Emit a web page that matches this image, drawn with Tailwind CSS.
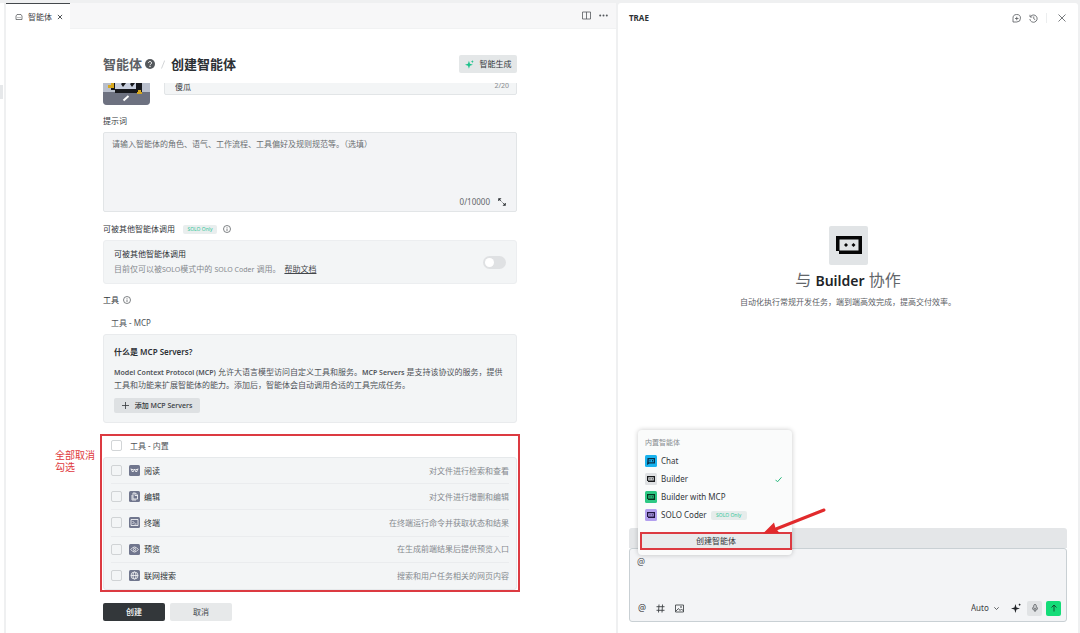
<!DOCTYPE html>
<html lang="zh-CN">
<head>
<meta charset="utf-8">
<title>创建智能体 - TRAE</title>
<script src="https://cdn.jsdelivr.net/npm/@tailwindcss/browser@4"></script>
</head>
<body class="flex min-h-screen bg-[#eff0f1] pt-[3px] font-['Noto_Sans','Noto_Sans_CJK_SC',sans-serif] text-[8px] leading-3 text-[#4f5358]">

<!-- Edge of the collapsed side bar -->
<div class="w-1 shrink-0 bg-white pt-[82px]"><div class="h-[14px] w-[3px] bg-[#e6e8ea]"></div></div>

<!-- Agent editor -->
<main class="ml-0.5 flex min-w-0 flex-[610] flex-col bg-white">
  <div class="flex h-[26px] items-stretch justify-between border-b border-[#f1f2f3] bg-[#f7f7f8]">
    <div class="-mb-px flex w-16 items-center gap-[5px] border-t border-[#44484c] bg-white pl-[9px] text-[#3c4043]">
      <svg class="size-2" viewBox="0 0 16 16" fill="none" stroke="currentColor" stroke-width="1.300"><path d="M4 3h8l2 3v7H2V6z"/><path d="M6 8v2M10 8v2"/></svg>
      <span>智能体</span>
      <button aria-label="关闭标签" class="size-[6px]"><svg viewBox="0 0 10 10" fill="none" stroke="currentColor" stroke-width="1.500"><path d="M1.500 1.500l7 7M8.500 1.500l-7 7"/></svg></button>
    </div>
    <div class="flex items-center gap-2 pr-2 text-[#55595d]">
      <button aria-label="拆分编辑器"><svg class="size-[9px]" viewBox="0 0 9 9" fill="none" stroke="currentColor" stroke-width=".8"><path d="M.5 1h8v7h-8zM4.500 1v7"/></svg></button>
      <button aria-label="更多"><svg class="h-[3px] w-[9px]" viewBox="0 0 9 3" fill="currentColor"><circle cx="1.2" cy="1.5" r="1"/><circle cx="4.5" cy="1.5" r="1"/><circle cx="7.8" cy="1.5" r="1"/></svg></button>
    </div>
  </div>

  <form class="mx-auto w-full max-w-[416px] pt-[26px] pr-0.5 pb-3">
    <div class="flex h-[18px] items-center">
      <h1 class="flex items-center text-[13px] leading-4 font-bold">
        <a href="#" class="text-[#5c6065]">智能体</a>
        <svg class="ml-[3px] size-[10px]" viewBox="0 0 18 18"><circle cx="9" cy="9" r="9" fill="#54585c"/><path d="M6.300 7a2.700 2.600 0 1 1 4.200 2.200c-1 .6-1.500 1-1.500 2" fill="none" stroke="#fff" stroke-width="1.800"/><circle cx="9" cy="13.500" r="1.200" fill="#fff"/></svg>
        <svg class="mx-[6px] h-[9px] w-1" viewBox="0 0 4 9" stroke="#d3d5d7" fill="none"><path d="M3.700 .5L.5 8.500"/></svg>
        <span class="text-[#2c3034]">创建智能体</span>
      </h1>
      <button type="button" class="ml-auto flex h-[18px] w-[58px] items-center justify-center gap-1.5 rounded-xs bg-[#e4e7e8] text-[#33373b]">
        <svg class="size-[9px]" viewBox="0 0 16 16" fill="#1ec28b"><path d="M7 1.500l1.700 5.300L14 8.500l-5.300 1.700L7 15.500l-1.700-5.300L0 8.500l5.300-1.700zM13 0l.8 2 2 .8-2 .8-.8 2-.8-2-2-.8 2-.8z"/></svg>
        智能生成
      </button>
    </div>

    <!-- First row of the form, scrolled partly under the heading -->
    <div class="mt-2.5 flex h-[22px] items-end gap-[14px] overflow-hidden">
      <button type="button" aria-label="更换头像" class="shrink-0 overflow-hidden rounded-[4px]">
        <svg class="h-[46px] w-[47px]" viewBox="0 0 47 46"><path fill="#b9bfcc" d="M0 0h47v46H0z"/><path fill="#c8cfde" d="M12 14h25v17H12z"/><path fill="#6d7180" d="M0 33h47v13H0z"/><path fill="#17181c" d="M8 12h4v19H8zM33 12h6v21h-6zM12 30h27v4H12z"/><path fill="#d7a81f" d="M5 26h6v3H5zM8 23h3v6H8zM35 31h3v4h-3zM34 33h5v2h-5z"/><path fill="#17181c" d="M18 25l4-4 1 3-3 4zM27 25l4-4 1 3-3 4z"/><path stroke="#fff" stroke-width="2" d="M20.500 41.500l5-4.500"/></svg>
      </button>
      <label class="relative mb-2.5 flex-1">
        <span class="sr-only">名称</span>
        <input type="text" value="傻瓜" class="block h-[18px] w-full rounded-xs border border-[#e2e5e7] bg-[#f3f5f6] px-2.5 text-[8px] text-[#33373b]">
        <span class="absolute top-[3px] right-2 text-[7px] text-[#888c90]">2/20</span>
      </label>
    </div>

    <label for="prompt" class="mt-2.5 block text-[#33373b]">提示词</label>
    <div class="relative mt-[5px]">
      <textarea id="prompt" placeholder="请输入智能体的角色、语气、工作流程、工具偏好及规则规范等。（选填）" class="block h-20 w-full resize-none rounded-xs border border-[#e2e5e7] bg-[#f3f4f6] px-2 py-[5px] placeholder:text-[#6a6e72]"></textarea>
      <div class="absolute right-[11px] bottom-1 flex items-center gap-2 text-[#62666a]">
        <span>0/10000</span>
        <button type="button" aria-label="展开" class="text-[#2c3034]"><svg class="size-2" viewBox="0 0 16 16" fill="currentColor" stroke="currentColor"><path d="M1 1h5L1 6zM15 15h-5l5-5z"/><path stroke-width="1.500" d="M2 2l5 5M14 14L9 9"/></svg></button>
      </div>
    </div>

    <div class="mt-[11px] flex items-center text-[#33373b]">
      可被其他智能体调用
      <span class="ml-2 h-[9px] w-[34px] rounded-xs bg-[#e9eeee] text-center text-[5px] leading-[9px] text-[#35c79a]">SOLO Only</span>
      <svg class="ml-1.5 size-2" viewBox="0 0 16 16" fill="none" stroke="#55595d" stroke-width="1.500"><circle cx="8" cy="8" r="7"/><path d="M8 7v5M8 4v1.500"/></svg>
    </div>

    <label class="mt-[5px] flex h-11 items-center justify-between rounded-[3px] border border-[#eceef0] bg-[#f3f5f6] px-2.5">
      <span>
        <span class="block text-[#2c3034]">可被其他智能体调用</span>
        <span class="mt-[3px] flex gap-1 text-[#85898e]"><span>目前仅可以被<span class="text-[7px]">SOLO</span>模式中的 <span class="text-[7px]">SOLO Coder</span> 调用。</span><a href="#" class="text-[#43474b] underline underline-offset-1">帮助文档</a></span>
      </span>
      <input type="checkbox" role="switch" aria-label="可被其他智能体调用" class="h-[13px] w-[23px] appearance-none rounded-full bg-[#dfe1e3] p-0.5 before:block before:size-[9px] before:rounded-full before:bg-white">
    </label>

    <h2 class="mt-2.5 flex items-center gap-1 text-[#33373b]">工具
      <svg class="size-2" viewBox="0 0 16 16" fill="none" stroke="#55595d" stroke-width="1.500"><circle cx="8" cy="8" r="7"/><path d="M8 7v5M8 4v1.500"/></svg>
    </h2>
    <h3 class="mt-[11px] pl-2">工具 - MCP</h3>
    <section class="mt-[5px] h-[89px] rounded-[3px] border border-[#e9ebed] bg-[#f3f5f6] px-2.5 pt-[11px]">
      <h4 class="font-bold text-[#2c3034]">什么是 <span class="font-semibold">MCP Servers?</span></h4>
      <p class="mt-2 whitespace-nowrap"><span class="text-[7px] font-semibold">Model Context Protocol (MCP)</span> 允许大语言模型访问自定义工具和服务。<span class="text-[7px] font-semibold">MCP Servers</span> 是支持该协议的服务，提供<br>工具和功能来扩展智能体的能力。添加后，智能体会自动调用合适的工具完成任务。</p>
      <button type="button" class="mt-[7px] flex h-[15px] w-[86px] items-center justify-center gap-1.5 rounded-xs bg-[#dee1e3] text-[7px] font-medium text-[#33373b]">
        <svg class="size-[7px]" viewBox="0 0 7 7" stroke="currentColor" stroke-width=".8"><path d="M3.500 0v7M0 3.500h7"/></svg>添加 MCP Servers
      </button>
    </section>

    <fieldset class="relative mt-[11px] h-[158px] pt-[5px]">
      <label class="flex h-[13px] items-center gap-2 pl-2"><input type="checkbox" class="size-[11px] appearance-none rounded-xs border border-[#d2d5d7] bg-white">工具 - 内置</label>
      <ul class="mt-[5px] grid h-[133px] auto-rows-fr divide-y divide-[#eaecee] rounded-[3px] border border-[#e6e9eb] bg-[#f3f5f6] px-[7px] text-[#2c3034]">
        <li class="flex items-center justify-between"><label class="flex items-center gap-1"><input type="checkbox" class="mr-[3px] size-[11px] appearance-none rounded-xs border border-[#d0d3d5]"><svg class="size-[11px]" viewBox="0 0 22 22" fill="none" stroke="#fff" stroke-width="1.600"><rect width="22" height="22" rx="3" fill="#70768d" stroke="none"/><path d="M3 8h2l1 5h3l1-4h2l1 4h3l1-5h2M5 9h4M13 9h4"/></svg>阅读</label><span class="text-[#85898e]">对文件进行检索和查看</span></li>
        <li class="flex items-center justify-between"><label class="flex items-center gap-1"><input type="checkbox" class="mr-[3px] size-[11px] appearance-none rounded-xs border border-[#d0d3d5]"><svg class="size-[11px]" viewBox="0 0 22 22" fill="none" stroke="#fff" stroke-width="1.600"><rect width="22" height="22" rx="3" fill="#70768d" stroke="none"/><path d="M8 4h5l4 4v8H8zM12 4v5h5M6 8v10h8"/></svg>编辑</label><span class="text-[#85898e]">对文件进行增删和编辑</span></li>
        <li class="flex items-center justify-between"><label class="flex items-center gap-1"><input type="checkbox" class="mr-[3px] size-[11px] appearance-none rounded-xs border border-[#d0d3d5]"><svg class="size-[11px]" viewBox="0 0 22 22" fill="none" stroke="#fff" stroke-width="1.600"><rect width="22" height="22" rx="3" fill="#70768d" stroke="none"/><path d="M4 5h14v12H4zM7 8l3 3-3 3M11 14h4"/></svg>终端</label><span class="text-[#85898e]">在终端运行命令并获取状态和结果</span></li>
        <li class="flex items-center justify-between"><label class="flex items-center gap-1"><input type="checkbox" class="mr-[3px] size-[11px] appearance-none rounded-xs border border-[#d0d3d5]"><svg class="size-[11px]" viewBox="0 0 22 22" fill="none" stroke="#fff" stroke-width="1.600"><rect width="22" height="22" rx="3" fill="#70768d" stroke="none"/><path d="M3.500 11q7.500-10 15 0-7.500 10-15 0z"/><circle cx="11" cy="11" r="2.200"/></svg>预览</label><span class="text-[#85898e]">在生成前端结果后提供预览入口</span></li>
        <li class="flex items-center justify-between"><label class="flex items-center gap-1"><input type="checkbox" class="mr-[3px] size-[11px] appearance-none rounded-xs border border-[#d0d3d5]"><svg class="size-[11px]" viewBox="0 0 22 22" fill="none" stroke="#fff" stroke-width="1.500"><rect width="22" height="22" rx="3" fill="#70768d" stroke="none"/><circle cx="11" cy="11" r="7"/><ellipse cx="11" cy="11" rx="3" ry="7"/><path d="M4 11h14"/></svg>联网搜索</label><span class="text-[#85898e]">搜索和用户任务相关的网页内容</span></li>
      </ul>
      <!-- Tutorial callout -->
      <div class="pointer-events-none absolute -inset-x-[3px] inset-y-0 border-2 border-[#dc3a41]"></div>
      <p class="absolute top-[15px] right-full mr-2 w-10 text-[10px] leading-3 text-[#e03a40]">全部取消勾选</p>
    </fieldset>

    <div class="mt-[11px] flex gap-[5px]">
      <button class="h-[18px] w-[62px] rounded-xs bg-[#33373a] font-medium text-white">创建</button>
      <button type="button" class="h-[18px] w-[62px] rounded-xs bg-[#e7e9ea] text-[#43474b]">取消</button>
    </div>
  </form>
</main>

<!-- Chat panel -->
<aside class="mr-0.5 ml-0.5 flex min-w-0 flex-[460] flex-col rounded-t-[3px] bg-white">
  <header class="flex h-[30px] items-center gap-2 pr-3 pl-[11px] text-[#55595d]">
    <h2 class="mr-auto font-bold text-[#2c3034]">TRAE</h2>
    <button aria-label="新建会话"><svg class="size-[9px]" viewBox="0 0 18 18" fill="none" stroke="currentColor" stroke-width="1.600"><path d="M2 16V9a7.500 7.500 0 1 1 7.500 7zM9.500 5.500v7M6 9h7"/></svg></button>
    <button aria-label="历史记录"><svg class="size-[9px]" viewBox="0 0 18 18" fill="none" stroke="currentColor" stroke-width="1.600"><path d="M3 5a7.300 7.300 0 1 1-1.300 5M2 1.500V6h4.500M9.500 5v4.500l3 2"/></svg></button>
    <span class="h-2.5 w-px bg-[#eceeef]"></span>
    <button aria-label="关闭" class="ml-[3px]"><svg class="size-2" viewBox="0 0 8 8" fill="none" stroke="currentColor" stroke-width=".8"><path d="M.5 .5l7 7M7.500 .5l-7 7"/></svg></button>
  </header>

  <section class="flex flex-1 flex-col items-center justify-center pb-7 text-center">
    <svg class="size-[39px]" viewBox="0 0 39 39"><rect width="39" height="39" rx="2" fill="#e1e4e6"/><path fill="#050505" fill-rule="evenodd" d="M7 10h26v18H10v-3H7zM10.500 13.500v11h19v-11z"/><path fill="#050505" d="M17 17l2 2-2 2-2-2zM24.500 17l2 2-2 2-2-2z"/></svg>
    <h1 class="mt-[5px] text-[16px] leading-5 text-[#62666a]">与 <span class="text-[14px] font-semibold text-[#202327]">Builder</span> 协作</h1>
    <p class="mt-[5px] text-[#5c6065]">自动化执行常规开发任务，端到端高效完成，提高交付效率。</p>
  </section>

  <div class="relative mx-[11px] mb-[11px]">
    <div class="h-5 rounded-t-[3px] bg-[#e4e6e8]"></div>
    <div class="rounded-[3px] border border-[#c9d0d4] bg-[#f3f4f6]">
      <textarea aria-label="输入消息" class="block h-[50px] w-full resize-none px-[7px] pt-[7px] text-[9px]">@</textarea>
      <div class="flex h-[22px] items-center gap-2.5 pr-[5px] pb-1 pl-2 text-[#3c4043]">
        <button aria-label="提及" class="text-[9px]">@</button>
        <button aria-label="引用"><svg class="size-[9px]" viewBox="0 0 9 9" fill="none" stroke="currentColor" stroke-width=".9"><path d="M3 .5L2.500 8.500M6.500 .5L6 8.500M.5 2.700h8M.5 6.300h8"/></svg></button>
        <button aria-label="图片"><svg class="size-[9px]" viewBox="0 0 18 18" fill="none" stroke="currentColor" stroke-width="1.700"><path d="M1 2h16v14H1zM2 14l5-5 3 4 3-3 4 4"/><circle cx="12" cy="6" r="1"/></svg></button>
        <span class="relative ml-auto flex items-center">
          <select aria-label="模型" class="w-[30px] appearance-none bg-transparent"><option>Auto</option></select>
          <svg class="pointer-events-none absolute right-0.5 h-[3px] w-[5px]" viewBox="0 0 5 3" fill="none" stroke="currentColor" stroke-width=".8"><path d="M.3 .3l2.200 2.200L4.700 .3"/></svg>
        </span>
        <button aria-label="优化提示词"><svg class="size-[10px]" viewBox="0 0 18 18" fill="#202327"><path d="M8 2l1.800 6.200L16 10l-6.200 1.800L8 18l-1.800-6.200L0 10l6.200-1.800zM15.500 1l2 2-2 2-2-2z"/></svg></button>
        <span class="-ml-1 flex gap-1">
          <button aria-label="语音" class="flex size-[15px] items-center justify-center rounded-xs bg-[#e1e3e5]"><svg class="size-2" viewBox="0 0 16 16" fill="none" stroke="#43474b" stroke-width="1.500"><rect x="5.500" y="1" width="5" height="9" rx="2.500"/><path d="M3 7v1.500q0 4 5 4t5-4V7M8 12.500V16"/></svg></button>
          <button aria-label="发送" class="flex size-[15px] items-center justify-center rounded-xs bg-[#14dc78]"><svg class="size-2" viewBox="0 0 8 8" fill="none" stroke="#12432b" stroke-width=".9"><path d="M4 7.500V1M1.500 3.500L4 1l2.500 2.500"/></svg></button>
        </span>
      </div>
    </div>

    <!-- Agent picker -->
    <div class="absolute bottom-[67px] left-[9px] h-[125px] w-[154px] rounded-[4px] bg-[#fafbfb] pr-[3px] pl-0.5 pt-[7px] text-[#33373b] shadow-[0_0_5px_rgba(0,0,0,0.22)]">
      <p class="pl-[5px] text-[7px] text-[#888c90]">内置智能体</p>
      <button class="mt-[3px] flex h-[18px] w-full items-center gap-1 px-[5px]"><svg class="size-3" viewBox="0 0 24 24"><rect width="24" height="24" rx="3" fill="#19b2ee"/><path fill="#083049" fill-rule="evenodd" d="M5 6h15v11H9l-5 3zM7.500 8.500v6h10v-6z"/><path fill="#083049" d="M9 10h2v3H9zM14 10h2v3h-2z"/></svg>Chat</button>
      <button class="flex h-[18px] w-full items-center gap-1 px-[5px]"><svg class="size-3" viewBox="0 0 24 24"><rect width="24" height="24" rx="3" fill="#dfe1e3"/><path fill="#17191b" fill-rule="evenodd" d="M4 6h16v12H6v-2H4zM6.500 8.500v6.500h11V8.500z"/><path fill="#17191b" d="M9 10.500h2v2.500H9zM13.500 10.500h2v2.500h-2z"/></svg>Builder<svg class="mr-0.5 ml-auto size-[7px]" viewBox="0 0 7 7" fill="none" stroke="#25b77b"><path d="M.5 3.800l2 2 4-4.500"/></svg></button>
      <button class="flex h-[18px] w-full items-center gap-1 px-[5px]"><svg class="size-3" viewBox="0 0 24 24"><rect width="24" height="24" rx="3" fill="#2dc984"/><path fill="#07351f" fill-rule="evenodd" d="M4 6h16v12H6v-2H4zM6.500 8.500v6.500h11V8.500z"/><path fill="#07351f" d="M9 10.500h2v2.500H9zM13.500 10.500h2v2.500h-2z"/></svg>Builder with MCP</button>
      <button class="flex h-[18px] w-full items-center gap-1 px-[5px]"><svg class="size-3" viewBox="0 0 24 24"><rect width="24" height="24" rx="3" fill="#b3a0ef"/><path fill="#20143f" fill-rule="evenodd" d="M4 6h16v12H6v-2H4zM6.500 8.500v6.500h11V8.500z"/><path fill="#20143f" d="M9 10.500h2v2.500H9zM13.500 10.500h2v2.500h-2z"/></svg>SOLO Coder<span class="h-[9px] w-9 rounded-xs bg-[#e6eceb] text-[5px] leading-[9px] text-[#35c79a]">SOLO Only</span></button>
      <button class="mt-2 h-[18px] w-[152px] border-2 border-[#dc3a41] bg-[#e9ebec]">创建智能体</button>
    </div>
    <!-- Callout arrow pointing at the create button -->
    <svg class="pointer-events-none absolute bottom-[87px] left-[133px] h-7 w-[65px]" viewBox="0 0 65 28"><path d="M62 3L14 22" stroke="#e12a2c" stroke-width="3" stroke-linecap="round"/><path fill="#e12a2c" d="M1 26.500L12 15.500 13.500 21 17.500 26z"/></svg>
  </div>
</aside>
</body>
</html>
